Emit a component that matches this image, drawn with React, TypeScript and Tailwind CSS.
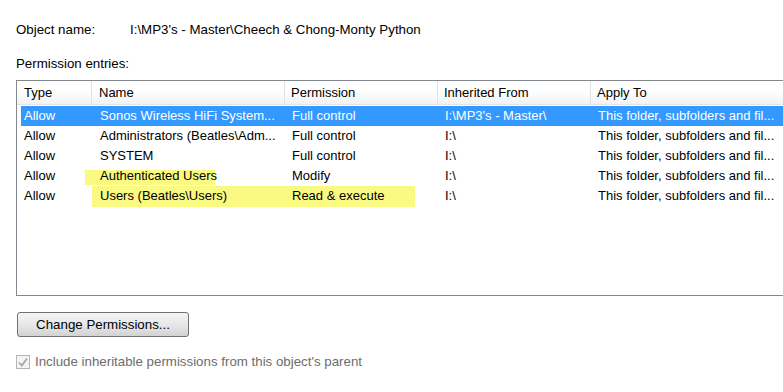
import React from "react";

const font = { fontFamily: '"Liberation Sans", Arial, sans-serif' };

type Row = {
  type: string;
  name: string;
  perm: string;
  inh: string;
  apply: string;
  selected?: boolean;
  hl?: "a" | "b";
};

const rows: Row[] = [
  {
    type: "Allow",
    name: "Sonos Wireless HiFi System...",
    perm: "Full control",
    inh: "I:\\MP3's - Master\\",
    apply: "This folder, subfolders and fil...",
    selected: true,
  },
  {
    type: "Allow",
    name: "Administrators (Beatles\\Adm...",
    perm: "Full control",
    inh: "I:\\",
    apply: "This folder, subfolders and fil...",
  },
  {
    type: "Allow",
    name: "SYSTEM",
    perm: "Full control",
    inh: "I:\\",
    apply: "This folder, subfolders and fil...",
  },
  {
    type: "Allow",
    name: "Authenticated Users",
    perm: "Modify",
    inh: "I:\\",
    apply: "This folder, subfolders and fil...",
    hl: "a",
  },
  {
    type: "Allow",
    name: "Users (Beatles\\Users)",
    perm: "Read & execute",
    inh: "I:\\",
    apply: "This folder, subfolders and fil...",
    hl: "b",
  },
];

export default function App() {
  return (
    <div
      className="w-[783px] h-[392px] bg-white overflow-hidden text-[13px] text-black"
      style={font}
    >
      <div className="pt-[22px] pl-[16px] flex leading-[16px] text-[13.3px]">
        <span className="w-[114px]">Object name:</span>
        <span>I:\MP3's - Master\Cheech &amp; Chong-Monty Python</span>
      </div>
      <div className="mt-[18px] pl-[16px] leading-[16px] text-[13.3px]">Permission entries:</div>

      <div className="mt-[8px] ml-[16px] w-[800px] h-[216px] border border-r-0 border-[#828790] whitespace-nowrap">
        <div className="flex h-[24px] items-center bg-gradient-to-b from-white from-40% to-[#f1f2f4] border-b border-[#e3e4e6] leading-[16px]">
          <div className="w-[75px] pl-[7px] h-full flex items-center border-r border-[#e0e1e3]">Type</div>
          <div className="w-[193px] pl-[7px] h-full flex items-center border-r border-[#e0e1e3]">Name</div>
          <div className="w-[153px] pl-[6px] h-full flex items-center border-r border-[#e0e1e3]">Permission</div>
          <div className="w-[153px] pl-[6px] h-full flex items-center border-r border-[#e0e1e3]">Inherited From</div>
          <div className="pl-[6px] h-full flex items-center">Apply To</div>
        </div>
        <div className="pt-[1px]">
          {rows.map((r, i) => (
            <div
              key={i}
              className={
                "relative ml-[4px] flex h-[20px] items-center leading-[16px] " +
                (r.selected ? "bg-[#3399ff] text-white" : "")
              }
            >
              {r.hl === "a" && (
                <div className="absolute left-[64px] top-[4px] w-[130px] h-[15px] bg-[#fafa82]" />
              )}
              {r.hl === "b" && (
                <div className="absolute left-[71px] top-[0px] w-[323px] h-[21px] bg-[#fafa82]" />
              )}
              <div className="relative w-[71px] pl-[3px]">{r.type}</div>
              <div className="relative w-[193px] pl-[8px]">{r.name}</div>
              <div className="relative w-[153px] pl-[7px]">{r.perm}</div>
              <div className="relative w-[153px] pl-[7px]">{r.inh}</div>
              <div className="relative pl-[7px]">{r.apply}</div>
            </div>
          ))}
        </div>
      </div>

      <div className="mt-[16px] ml-[17px]">
        <button
          className="w-[172px] h-[25px] rounded-[3px] border border-[#707070] bg-gradient-to-b from-[#f4f4f4] via-[#e8e8e8] to-[#d2d2d2] text-[13.3px] leading-[16px] text-black"
          style={font}
        >
          Change Permissions...
        </button>
      </div>

      <div className="mt-[17px] ml-[16px] flex items-center gap-[5px] leading-[16px]">
        <div className="w-[14px] h-[14px] border border-[#b5b5b5] bg-[#f4f4f4] flex items-center justify-center">
          <svg width="12" height="12" viewBox="0 0 12 12">
            <path d="M2 6.5 L4.8 9.5 L10 2.5" fill="none" stroke="#a6a6a6" strokeWidth="1.8" />
          </svg>
        </div>
        <span className="text-[#6d6d6d] text-[13.3px]">Include inheritable permissions from this object's parent</span>
      </div>
    </div>
  );
}
